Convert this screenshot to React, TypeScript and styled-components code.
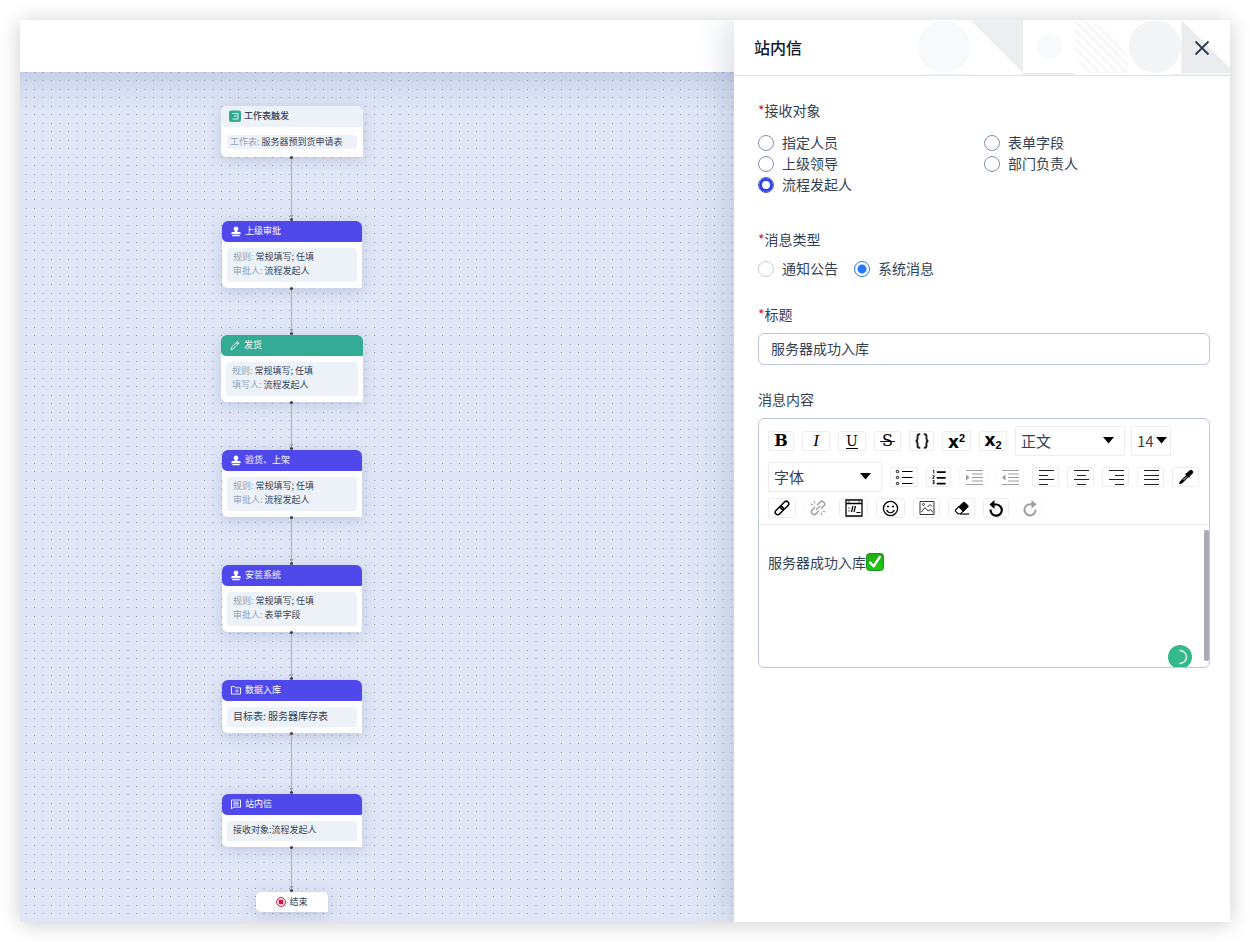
import React, { ReactNode, useState } from "react";
import styled, { createGlobalStyle, css } from "styled-components";

const GlobalStyle = createGlobalStyle`
  *, *::before, *::after { box-sizing: border-box; }
  body {
    margin: 0;
    background: #fff;
    color: #334155;
    font-family: "Noto Sans CJK SC", sans-serif;
    font-size: 14px;
  }
  button, input, select, textarea { font: inherit; color: inherit; }
`;

/* ---------- Shell ---------- */

const Page = styled.div`
  display: flex;
  min-height: 100vh;
  padding: 20px;
`;

const Frame = styled.div`
  flex: 1;
  display: flex;
  min-width: 0;
  box-shadow: 0 2px 20px rgba(0, 0, 0, 0.2);
`;

const Window = styled.div`
  flex: 1;
  display: flex;
  min-width: 0;
  overflow: hidden;
  background: #fff;
`;

const Workspace = styled.main`
  flex: 1;
  display: flex;
  flex-direction: column;
  min-width: 0;
`;

const TopBar = styled.header`
  height: 52px;
  background: #fff;
`;

const Canvas = styled.section`
  flex: 1;
  padding: 34px 0 10px 201px;
  background-color: #e0e6f6;
  background-image:
    linear-gradient(to bottom, rgba(150, 170, 205, 0.38), rgba(150, 170, 205, 0.18) 14px, rgba(150, 170, 205, 0) 40px),
    radial-gradient(circle at 6px 0.5px, #bbc0d2 0.6px, transparent 0.7px),
    radial-gradient(circle at 14.5px 0.5px, #949bb2 0.5px, transparent 0.6px),
    radial-gradient(circle at 6px 8.5px, #bbc0d2 0.6px, transparent 0.7px),
    radial-gradient(circle at 14.5px 8.5px, #949bb2 0.5px, transparent 0.6px);
  background-size: 100% 100%, 17px 17px, 17px 17px, 17px 17px, 17px 17px;
`;

/* ---------- Flow nodes ---------- */

const Flow = styled.div`
  display: flex;
  flex-direction: column;
  align-items: center;
  width: 142px;
`;

type Tone = "plain" | "violet" | "green";

const tones = {
  plain: css`background: #edf1f8; color: #334155; font-weight: 500;`,
  violet: css`background: #4f49eb; color: #fff;`,
  green: css`background: #34ab95; color: #fff;`,
};

const NodeCard = styled.article<{ $wide?: boolean }>`
  width: ${(p) => (p.$wide ? 142 : 140)}px;
  border-radius: 6px 6px 1px 6px;
  background: #fff;
  box-shadow: 0 3px 14px rgba(110, 130, 180, 0.3);
`;

const NodeHead = styled.header<{ $tone: Tone }>`
  display: flex;
  align-items: center;
  gap: 3px;
  height: 21px;
  padding: 0 8px 2px;
  border-radius: 6px 6px 1px 5px;
  font-size: 9px;
  line-height: 14px;
  ${(p) => tones[p.$tone]}
`;

const NodeBody = styled.div<{ $compact?: boolean }>`
  padding: ${(p) => (p.$compact ? "8px 6px" : "6px 5px")};
`;

const NodeInfo = styled.div<{ $compact?: boolean; $large?: boolean }>`
  padding: ${(p) => (p.$compact ? "0 3px" : "2px 6px 4px")};
  border-radius: 3px;
  background: #edf2f9;
  font-size: ${(p) => (p.$large ? 10 : 9)}px;
  line-height: 14px;
  white-space: nowrap;
`;

const Muted = styled.span`
  color: #94a3b8;
`;

const EndNode = styled.div`
  display: flex;
  align-items: center;
  justify-content: center;
  gap: 3px;
  width: 72px;
  height: 20px;
  border-radius: 5px 5px 1px 5px;
  background: #fff;
  box-shadow: 0 3px 14px rgba(110, 130, 180, 0.3);
  font-size: 9px;
  line-height: 14px;
`;

const Edge = styled.svg`
  display: block;
  overflow: visible;
`;

function Connector({ length }: { length: number }) {
  return (
    <Edge width="10" height={length} aria-hidden="true">
      <path d={`M4.500 0V${length}`} stroke="#b1b3bb" strokeWidth="1.200" />
      <path d={`M2.500 ${length - 6}h4l-2 3z`} fill="#a0a2aa" />
      <circle cx="4.500" cy="0.500" r="1.600" fill="#444" />
      <circle cx="4.500" cy={length - 1.5} r="1.600" fill="#444" />
    </Edge>
  );
}

const TableIcon = () => (
  <svg width="12" height="12" viewBox="0 0 12 12" aria-hidden="true">
    <rect y="0.500" width="12" height="11.500" rx="2" fill="#33ab94" />
    <path d="M3.500 3.500h5.500v5.500H3.500M5 6h3" fill="none" stroke="#d8f1ec" />
  </svg>
);

const StampIcon = () => (
  <svg width="12" height="12" viewBox="0 0 12 12" aria-hidden="true">
    <path
      d="M6 1.500a2.400 2.400 0 0 1 1.300 4.400v1.100h2.600a.7.7 0 0 1 .7.7v1.500H1.400V7.700a.7.7 0 0 1 .7-.7h2.600v-1.100A2.400 2.400 0 0 1 6 1.500zM2.300 10h7.400v1.200H2.300z"
      fill="#fff"
    />
  </svg>
);

const PencilIcon = () => (
  <svg width="12" height="12" viewBox="0 0 12 12" fill="none" stroke="#fff" strokeWidth="0.900" aria-hidden="true">
    <path d="M2 10.500l.5-2 6-6 1.500 1.500-6 6zM7.300 3.700l1.500 1.500" />
  </svg>
);

const FolderIcon = () => (
  <svg width="12" height="12" viewBox="0 0 12 12" fill="none" stroke="#fff" strokeWidth="0.900" aria-hidden="true">
    <path d="M1.500 2.500h3l1.200 1.300h4.800v6.200h-9zM5 7h3M6.900 5.600l1.400 1.400-1.400 1.400" />
  </svg>
);

const MessageIcon = () => (
  <svg width="12" height="12" viewBox="0 0 12 12" fill="none" stroke="#fff" strokeWidth="0.900" aria-hidden="true">
    <path d="M1.500 11V2h9v7.200H3.200zM3.300 4h5.400M3.300 5.600h5.400M3.300 7.200h5.400" />
  </svg>
);

const StopIcon = () => (
  <svg width="10" height="10" viewBox="0 0 10 10" aria-hidden="true">
    <circle cx="5" cy="5" r="4.400" fill="none" stroke="#d3103f" strokeWidth="1" />
    <rect x="2.800" y="2.800" width="4.400" height="4.400" rx="0.500" fill="#d3103f" />
  </svg>
);

interface FlowNode {
  title: string;
  tone: Tone;
  icon: ReactNode;
  wide?: boolean;
  compact?: boolean;
  large?: boolean;
  rows: { label?: string; value: string }[];
  next: number;
}

const flowNodes: FlowNode[] = [
  {
    title: "工作表触发",
    tone: "plain",
    icon: <TableIcon />,
    wide: true,
    compact: true,
    rows: [{ label: "工作表: ", value: "服务器预到货申请表" }],
    next: 64,
  },
  {
    title: "上级审批",
    tone: "violet",
    icon: <StampIcon />,
    rows: [
      { label: "规则: ", value: "常规填写; 任填" },
      { label: "审批人: ", value: "流程发起人" },
    ],
    next: 47,
  },
  {
    title: "发货",
    tone: "green",
    icon: <PencilIcon />,
    wide: true,
    rows: [
      { label: "规则: ", value: "常规填写; 任填" },
      { label: "填写人: ", value: "流程发起人" },
    ],
    next: 48,
  },
  {
    title: "验货、上架",
    tone: "violet",
    icon: <StampIcon />,
    rows: [
      { label: "规则: ", value: "常规填写; 任填" },
      { label: "审批人: ", value: "流程发起人" },
    ],
    next: 48,
  },
  {
    title: "安装系统",
    tone: "violet",
    icon: <StampIcon />,
    rows: [
      { label: "规则: ", value: "常规填写; 任填" },
      { label: "审批人: ", value: "表单字段" },
    ],
    next: 48,
  },
  {
    title: "数据入库",
    tone: "violet",
    icon: <FolderIcon />,
    large: true,
    rows: [{ value: "目标表: 服务器库存表" }],
    next: 61,
  },
  {
    title: "站内信",
    tone: "violet",
    icon: <MessageIcon />,
    rows: [{ value: "接收对象:流程发起人" }],
    next: 45,
  },
];

/* ---------- Drawer ---------- */

const Drawer = styled.aside`
  position: relative;
  flex: 0 0 496px;
  background: #fff;
  box-shadow: -6px 0 32px rgba(70, 95, 135, 0.22);
`;

const DrawerHead = styled.header`
  position: relative;
  display: flex;
  align-items: center;
  justify-content: space-between;
  height: 56px;
  padding: 0 20px;
  border-bottom: 1px solid #dde4ec;
`;

const Pattern = styled.svg`
  position: absolute;
  top: 0;
  right: 0;
`;

const Title = styled.h1`
  margin: 0;
  padding-bottom: 2px;
  color: #0f172a;
  font-size: 16px;
  font-weight: 500;
  line-height: 24px;
`;

const CloseButton = styled.button`
  position: relative;
  display: flex;
  padding: 0;
  border: 0;
  background: none;
`;

const Form = styled.form`
  display: flex;
  flex-direction: column;
  gap: 24px;
  padding: 24px 20px 24px 24px;
`;

const Field = styled.div`
  display: flex;
  flex-direction: column;
  gap: 9px;
  min-width: 0;
`;

const Label = styled.label`
  line-height: 20px;
`;

const Star = styled.span`
  color: #d3103f;
`;

const ReceiverGrid = styled.div`
  display: grid;
  grid-template-columns: 1fr 1fr;
  padding: 3px 0 10px;
`;

const InlineGroup = styled.div`
  display: flex;
  gap: 16px;
`;

const Choice = styled.label<{ $tall?: boolean }>`
  display: flex;
  align-items: center;
  gap: 8px;
  height: ${(p) => (p.$tall ? 22 : 21)}px;
`;

const ChoiceText = styled.span`
  padding-bottom: 2px;
  line-height: 20px;
`;

const RingRadio = styled.input`
  appearance: none;
  width: 16px;
  height: 16px;
  margin: 0;
  border: 1px solid #8290ac;
  border-radius: 50%;
  background: #fff;
  &:checked {
    border-color: #4d5ba8;
    box-shadow: inset 0 0 0 3px #2f43ee;
  }
`;

const DotRadio = styled(RingRadio)`
  border-color: #cfcfcf;
  &:checked {
    border-color: #2478ff;
    box-shadow: none;
    background: radial-gradient(circle, #2478ff 4px, #fff 5px);
  }
`;

const TextInput = styled.input`
  height: 32px;
  width: 100%;
  padding: 0 12px 2px;
  border: 1px solid #bcc8d9;
  border-radius: 6px;
  background: #fff;
  outline: 0;
`;

/* ---------- Rich text editor ---------- */

const Editor = styled.div`
  position: relative;
  overflow: hidden;
  border: 1px solid #bcc8d9;
  border-radius: 6px;
`;

const Toolbar = styled.div`
  display: flex;
  flex-direction: column;
  gap: 6px;
  padding: 7px 8px 6px 9px;
  border-bottom: 1px solid #ebedf0;
`;

const ToolRow = styled.div`
  display: flex;
  align-items: center;
  gap: 8px;
`;

const SelectGroup = styled.div`
  display: flex;
  gap: 6px;
`;

const Tool = styled.button<{ $w: number }>`
  display: flex;
  flex: none;
  align-items: center;
  justify-content: center;
  width: ${(p) => p.$w}px;
  height: 20px;
  padding: 0;
  border: 1px solid #ededed;
  border-radius: 2px;
  background: #fff;
  color: #000;
  &:disabled {
    opacity: 0.38;
  }
`;

const Glyph = styled.span<{ $size: number }>`
  font-family: "DejaVu Serif", serif;
  font-size: ${(p) => p.$size}px;
  line-height: 18px;
`;

const BoldGlyph = styled(Glyph)`
  font-weight: 700;
`;

const ItalicGlyph = styled(Glyph)`
  font-family: "Liberation Serif", serif;
  font-style: italic;
`;

const UnderGlyph = styled(Glyph)`
  text-decoration: underline;
  text-underline-offset: 2px;
`;

const StrikeGlyph = styled(Glyph)`
  padding: 0 2px;
  background: linear-gradient(#222, #222) center / 100% 1px no-repeat;
`;

const ScriptGlyph = styled(Glyph)<{ $drop?: boolean }>`
  padding-top: ${(p) => (p.$drop ? 4 : 0)}px;
  font-family: "DejaVu Sans", sans-serif;
  font-weight: 700;
`;

const Script = styled.span<{ $up?: boolean }>`
  position: relative;
  top: ${(p) => (p.$up ? -6 : 3)}px;
  font-family: "Liberation Sans", sans-serif;
  font-size: 11px;
`;

const SelectBox = styled.div<{ $w: number; $caret: number }>`
  position: relative;
  width: ${(p) => p.$w}px;
  height: 30px;
  select {
    appearance: none;
    width: 100%;
    height: 30px;
    padding: 0 5px 2px;
    border: 1px solid #ededed;
    border-radius: 2px;
    background: #fff;
    font-size: 15px;
  }
  svg {
    position: absolute;
    top: 11px;
    right: ${(p) => p.$caret}px;
    pointer-events: none;
  }
`;

const EditorArea = styled.div`
  min-height: 142px;
  padding: 26px 9px;
  outline: 0;
  p {
    display: flex;
    align-items: center;
    margin: 0;
    line-height: 22px;
  }
`;

const ScrollThumb = styled.div`
  position: absolute;
  top: 111px;
  right: 0;
  bottom: 6px;
  width: 5px;
  border-radius: 2px;
  background: #aba9b3;
`;

const Badge = styled.svg`
  position: absolute;
  right: 17px;
  bottom: -2px;
`;

const CheckEmoji = () => (
  <svg width="18" height="18" viewBox="0 0 18 18" role="img" aria-label="✅">
    <defs>
      <linearGradient id="check-fill" x1="0" y1="0" x2="0" y2="1">
        <stop offset="0" stopColor="#1fae12" />
        <stop offset="1" stopColor="#1fc816" />
      </linearGradient>
    </defs>
    <rect x="0.500" y="0.500" width="17" height="17" rx="3" fill="url(#check-fill)" stroke="#159413" />
    <path d="M4.200 9.600l3.400 3.700L13.800 4" fill="none" stroke="#fff" strokeWidth="2.400" strokeLinecap="round" strokeLinejoin="round" />
  </svg>
);

function Dropdown({ label, value, w, caret }: { label: string; value: string; w: number; caret: number }) {
  return (
    <SelectBox $w={w} $caret={caret}>
      <select aria-label={label} defaultValue={value}>
        <option>{value}</option>
      </select>
      <svg width="11" height="7" viewBox="0 0 11 7" aria-hidden="true">
        <path d="M0 0h11L5.500 6.500z" fill="#000" />
      </svg>
    </SelectBox>
  );
}

function Ico({ children, size = 18 }: { children: ReactNode; size?: number }) {
  return (
    <svg width={size} height={size} viewBox="0 0 18 18" fill="none" stroke="#000" strokeWidth="1" aria-hidden="true">
      {children}
    </svg>
  );
}

const alignIcons = [
  { name: "左对齐", d: "M2 2.500h15M2 7.500h9M2 11.500h15M2 16.500h9" },
  { name: "居中", d: "M2 2.500h15M5 7.500h9M2 11.500h15M5 16.500h9" },
  { name: "右对齐", d: "M2 2.500h15M8 7.500h9M2 11.500h15M8 16.500h9" },
  { name: "两端对齐", d: "M2 2.500h15M2 7.500h15M2 11.500h15M2 16.500h15" },
];

const receivers = ["指定人员", "表单字段", "上级领导", "部门负责人", "流程发起人"];
const kinds = ["通知公告", "系统消息"];

function HeaderPattern() {
  return (
    <Pattern width="312" height="55" viewBox="0 0 312 55" aria-hidden="true">
      <defs>
        <clipPath id="quarter">
          <path d="M158 0a53 53 0 0 1 53 53h-53z" />
        </clipPath>
      </defs>
      <circle cx="26" cy="26.500" r="26" fill="#f8f9fb" />
      <path d="M5 54h47v1H5z" fill="#f6f7f8" />
      <path d="M52.500 0H105v53z" fill="#edeef0" />
      <path d="M105 53h52l-2 2h-52z" fill="#edeef0" />
      <circle cx="131.500" cy="26.500" r="13" fill="#f8f9fb" />
      <g clipPath="url(#quarter)" stroke="#f6f7f9" strokeWidth="3">
        <path d="M100 -20l90 90M109 -20l90 90M118 -20l90 90M127 -20l90 90M136 -20l90 90M145 -20l90 90M154 -20l90 90" />
      </g>
      <circle cx="237" cy="26.500" r="26.200" fill="#f4f5f7" />
      <path d="M263.500 0L312 48v5h-48.500z" fill="#ebecee" />
      <path d="M250 55l8-1.500h54V55z" fill="#f3f4f6" />
    </Pattern>
  );
}

export default function App() {
  const [receiver, setReceiver] = useState("流程发起人");
  const [kind, setKind] = useState("系统消息");
  const [title, setTitle] = useState("服务器成功入库");

  return (
    <>
      <GlobalStyle />
      <Page>
        <Frame>
          <Window>
            <Workspace>
              <TopBar />
              <Canvas>
                <Flow>
                  {flowNodes.map((n) => (
                    <React.Fragment key={n.title}>
                      <NodeCard $wide={n.wide}>
                        <NodeHead $tone={n.tone}>
                          {n.icon}
                          {n.title}
                        </NodeHead>
                        <NodeBody $compact={n.compact}>
                          <NodeInfo $compact={n.compact} $large={n.large}>
                            {n.rows.map((r) => (
                              <div key={r.value}>
                                {r.label && <Muted>{r.label}</Muted>}
                                {r.value}
                              </div>
                            ))}
                          </NodeInfo>
                        </NodeBody>
                      </NodeCard>
                      <Connector length={n.next} />
                    </React.Fragment>
                  ))}
                  <EndNode>
                    <StopIcon />
                    结束
                  </EndNode>
                </Flow>
              </Canvas>
            </Workspace>

            <Drawer>
              <DrawerHead>
                <HeaderPattern />
                <Title>站内信</Title>
                <CloseButton type="button" aria-label="关闭">
                  <svg width="16" height="16" viewBox="0 0 16 16" fill="none" stroke="#2c3b50" strokeWidth="1.800" aria-hidden="true">
                    <path d="M1.500 1.500l13 13M14.500 1.500l-13 13" />
                  </svg>
                </CloseButton>
              </DrawerHead>

              <Form>
                <Field role="radiogroup" aria-labelledby="receiver-label">
                  <Label as="span" id="receiver-label">
                    <Star>*</Star>接收对象
                  </Label>
                  <ReceiverGrid>
                    {receivers.map((r) => (
                      <Choice key={r}>
                        <RingRadio type="radio" name="receiver" checked={receiver === r} onChange={() => setReceiver(r)} />
                        <ChoiceText>{r}</ChoiceText>
                      </Choice>
                    ))}
                  </ReceiverGrid>
                </Field>

                <Field role="radiogroup" aria-labelledby="kind-label">
                  <Label as="span" id="kind-label">
                    <Star>*</Star>消息类型
                  </Label>
                  <InlineGroup>
                    {kinds.map((k) => (
                      <Choice key={k} $tall>
                        <DotRadio type="radio" name="kind" checked={kind === k} onChange={() => setKind(k)} />
                        <ChoiceText>{k}</ChoiceText>
                      </Choice>
                    ))}
                  </InlineGroup>
                </Field>

                <Field>
                  <Label htmlFor="title">
                    <Star>*</Star>标题
                  </Label>
                  <TextInput id="title" value={title} onChange={(e) => setTitle(e.target.value)} />
                </Field>

                <Field>
                  <Label as="span" id="content-label">
                    消息内容
                  </Label>
                  <Editor>
                    <Toolbar>
                      <ToolRow>
                        <Tool type="button" $w={26} aria-label="粗体"><BoldGlyph $size={16}>B</BoldGlyph></Tool>
                        <Tool type="button" $w={28} aria-label="斜体"><ItalicGlyph $size={17}>I</ItalicGlyph></Tool>
                        <Tool type="button" $w={28} aria-label="下划线"><UnderGlyph $size={14}>U</UnderGlyph></Tool>
                        <Tool type="button" $w={27} aria-label="删除线"><StrikeGlyph $size={16}>S</StrikeGlyph></Tool>
                        <Tool type="button" $w={25} aria-label="代码">
                          <Ico size={16}>
                            <path
                              d="M7 1.500H6q-2 0-2 2v3q0 2-2 2.500 2 .5 2 2.500v3q0 2 2 2h1M11 1.500h1q2 0 2 2v3q0 2 2 2.500-2 .5-2 2.500v3q0 2-2 2h-1"
                              strokeWidth="2.200"
                              stroke="#222"
                            />
                          </Ico>
                        </Tool>
                        <Tool type="button" $w={29} aria-label="上标"><ScriptGlyph $size={17} $drop>x<Script $up>2</Script></ScriptGlyph></Tool>
                        <Tool type="button" $w={28} aria-label="下标"><ScriptGlyph $size={17}>x<Script>2</Script></ScriptGlyph></Tool>
                        <SelectGroup>
                          <Dropdown label="段落" value="正文" w={110} caret={11} />
                          <Dropdown label="字号" value="14" w={40} caret={4} />
                        </SelectGroup>
                      </ToolRow>

                      <ToolRow>
                        <Dropdown label="字体" value="字体" w={114} caret={11} />
                        <Tool type="button" $w={28} aria-label="无序列表">
                          <Ico>
                            <path d="M7 3.500h10.500M7 9.500h10.500M7 15.500h10.500" strokeWidth="1.200" />
                            <circle cx="2.500" cy="3.500" r="1.200" />
                            <circle cx="2.500" cy="9.500" r="1.200" />
                            <circle cx="2.500" cy="15.500" r="1.200" />
                          </Ico>
                        </Tool>
                        <Tool type="button" $w={25} aria-label="有序列表">
                          <Ico size={16}>
                            <path d="M6.500 3.500h10M6.500 10h10M6.500 16.500h10" strokeWidth="1.800" />
                            <path d="M2 1.500h1.200V5M1.800 7.500h1.700v1.500l-1.700 1.500h2M1.800 13h1.700v3.500H1.800M2 14.800h1.500" />
                          </Ico>
                        </Tool>
                        <Tool type="button" $w={29} aria-label="增加缩进" disabled>
                          <Ico>
                            <path d="M1 2.500h17M7 6h11M7 9.500h11M7 13h11M1 16.500h17" strokeWidth="1.200" />
                            <path d="M1 6.500l3.500 3L1 12.500z" fill="#000" stroke="none" />
                          </Ico>
                        </Tool>
                        <Tool type="button" $w={28} aria-label="减少缩进" disabled>
                          <Ico>
                            <path d="M1 2.500h17M7 6h11M7 9.500h11M7 13h11M1 16.500h17" strokeWidth="1.200" />
                            <path d="M4.500 6.500L1 9.500l3.500 3z" fill="#000" stroke="none" />
                          </Ico>
                        </Tool>
                        {alignIcons.map((a) => (
                          <Tool key={a.name} type="button" $w={27} aria-label={a.name}>
                            <Ico><path d={a.d} stroke="#222" /></Ico>
                          </Tool>
                        ))}
                        <Tool type="button" $w={27} aria-label="颜色">
                          <Ico size={16}>
                            <path d="M1.500 16.500l1.500-3 6.500-6.500 2 2-6.500 6.500z" fill="#000" />
                            <path d="M6 12.500l4-4" stroke="#fff" />
                            <path d="M8.500 5.500l1.500-.5 3-3q1.500-1.200 3 0t0 3l-3 3-.5 1.500z" fill="#000" />
                          </Ico>
                        </Tool>
                      </ToolRow>

                      <ToolRow>
                        <Tool type="button" $w={28} aria-label="链接">
                          <Ico>
                            <g strokeWidth="1.500" transform="rotate(-45 9 9)">
                              <rect x="0.500" y="6.500" width="9.500" height="5" rx="2.500" />
                              <rect x="8" y="6.500" width="9.500" height="5" rx="2.500" />
                            </g>
                          </Ico>
                        </Tool>
                        <Tool type="button" $w={27} aria-label="取消链接" disabled>
                          <Ico>
                            <g strokeWidth="1.400" transform="rotate(-45 9 9)">
                              <path d="M7.500 6.300h-4a2.700 2.700 0 0 0 0 5.400h4M10.500 6.300h4a2.700 2.700 0 0 1 0 5.400h-4M6 9h6" />
                            </g>
                            <path d="M5 1.500l1 3M1.500 5l3 1M13 16.500l-1-3M16.500 13l-3-1" />
                          </Ico>
                        </Tool>
                        <Tool type="button" $w={29} aria-label="代码块">
                          <Ico>
                            <path d="M1 1h16v16H1zM1 4.500h16" strokeWidth="1.300" />
                            <path d="M3.500 2.800h1M13.500 2.800h1M4 8.500v1M4 11.500v1M8 7l-1.500 6M10.500 7L9 13M11.500 13.500h4" strokeWidth="1.200" />
                          </Ico>
                        </Tool>
                        <Tool type="button" $w={29} aria-label="表情">
                          <Ico size={17}>
                            <circle cx="9" cy="9" r="7.500" strokeWidth="1.400" />
                            <path d="M5 10.500q1 3 4 3t4-3" strokeWidth="1.300" />
                            <circle cx="6.300" cy="6.800" r="1.100" fill="#000" stroke="none" />
                            <circle cx="11.700" cy="6.800" r="1.100" fill="#000" stroke="none" />
                          </Ico>
                        </Tool>
                        <Tool type="button" $w={27} aria-label="图片">
                          <Ico>
                            <path d="M2 2.500h14v13H2z" stroke="#333" />
                            <path d="M3.500 13l3.500-4.500 3 3.500 2.500-1.500 2.500 3" stroke="#333" />
                            <circle cx="5.500" cy="5.500" r="1" stroke="#333" />
                            <path d="M9.500 8l2.500-2.500 2 2" stroke="#333" />
                          </Ico>
                        </Tool>
                        <Tool type="button" $w={27} aria-label="清除格式">
                          <Ico size={16}>
                            <path d="M1.500 11.500l4-4 5 5-3 3H4.500l-3-3z" strokeWidth="1.300" />
                            <path d="M5.500 7.500L10 3q1-1 2.200 0L15.500 6q1 1.200 0 2.200l-5 4.800z" fill="#000" />
                            <path d="M7 15.800h10" strokeWidth="1.300" />
                          </Ico>
                        </Tool>
                        <Tool type="button" $w={26} aria-label="撤销">
                          <Ico>
                            <path d="M6 5.500h3.500a5.600 5.600 0 1 1-5.900 5" strokeWidth="2.200" />
                            <path d="M7.500 1v9L2.500 5.500z" fill="#000" stroke="none" />
                          </Ico>
                        </Tool>
                        <Tool type="button" $w={26} aria-label="重做" disabled>
                          <Ico>
                            <path d="M11 5.200H9a5.600 5.600 0 1 0 5.600 5.600" strokeWidth="2" />
                            <path d="M10.500 1v8.400L15.500 5.200z" fill="#000" stroke="none" />
                          </Ico>
                        </Tool>
                      </ToolRow>
                    </Toolbar>

                    <EditorArea
                      contentEditable
                      suppressContentEditableWarning
                      role="textbox"
                      aria-multiline="true"
                      aria-labelledby="content-label"
                    >
                      <p>
                        服务器成功入库
                        <CheckEmoji />
                      </p>
                    </EditorArea>
                    <ScrollThumb />
                    <Badge width="24" height="24" viewBox="0 0 24 24" aria-hidden="true">
                      <circle cx="12" cy="12" r="12" fill="#35b98a" />
                      <path d="M12 5.500a6.500 6.500 0 0 1 0 13" fill="none" stroke="#e6f7f1" strokeWidth="1.400" strokeLinecap="round" />
                    </Badge>
                  </Editor>
                </Field>
              </Form>
            </Drawer>
          </Window>
        </Frame>
      </Page>
    </>
  );
}
